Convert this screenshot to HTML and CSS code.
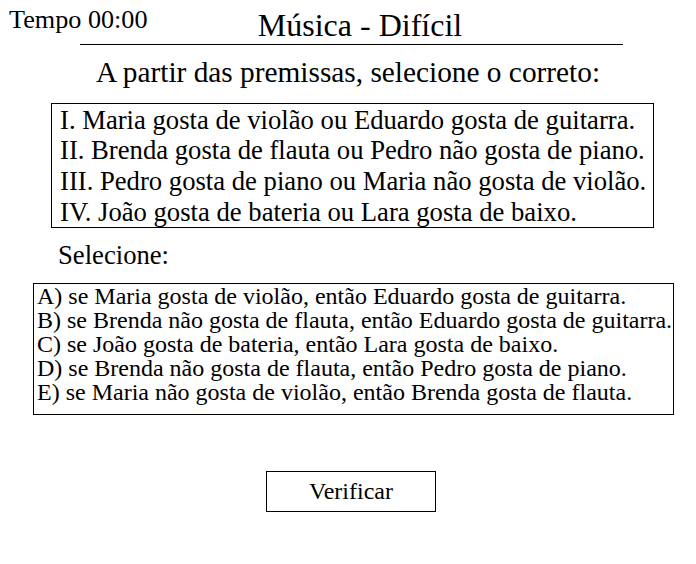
FILE: index.html
```html
<!DOCTYPE html>
<html lang="pt">
<head>
<meta charset="utf-8">
<title>Música - Difícil</title>
<link rel="stylesheet" href="styles.css">
</head>
<body>
<div class="page">
  <header class="header">
    <div class="timer">Tempo 00:00</div>
    <h1 class="title">Música - Difícil</h1>
  </header>
  <p class="prompt">A partir das premissas, selecione o correto:</p>
  <div class="premises">
    <div class="line">I. Maria gosta de violão ou Eduardo gosta de guitarra.</div>
    <div class="line">II. Brenda gosta de flauta ou Pedro não gosta de piano.</div>
    <div class="line">III. Pedro gosta de piano ou Maria não gosta de violão.</div>
    <div class="line">IV. João gosta de bateria ou Lara gosta de baixo.</div>
  </div>
  <p class="select-label">Selecione:</p>
  <div class="options">
    <div class="option">A) se Maria gosta de violão, então Eduardo gosta de guitarra.</div>
    <div class="option">B) se Brenda não gosta de flauta, então Eduardo gosta de guitarra.</div>
    <div class="option">C) se João gosta de bateria, então Lara gosta de baixo.</div>
    <div class="option">D) se Brenda não gosta de flauta, então Pedro gosta de piano.</div>
    <div class="option">E) se Maria não gosta de violão, então Brenda gosta de flauta.</div>
  </div>
  <div class="actions">
    <button class="verify" type="button">Verificar</button>
  </div>
</div>
</body>
</html>
```

FILE: styles.css
```css
html, body {
  margin: 0;
  padding: 0;
  background: #ffffff;
}

body {
  font-family: "Liberation Serif", "Times New Roman", serif;
  color: #000000;
}

.page {
  width: 696px;
}

.header {
  position: relative;
}

.timer {
  position: absolute;
  left: 9px;
  top: 5px;
  font-size: 26.2px;
  line-height: 1.15;
}

.title {
  margin: 0 73px 0 80px;
  padding: 7px 0 0 17px;
  font-size: 32px;
  font-weight: normal;
  line-height: 1.15;
  text-align: center;
  border-bottom: 1px solid #000000;
}

.prompt {
  margin: 11px 0 0 0;
  font-size: 29.33px;
  line-height: 1.15;
  text-align: center;
}

.premises {
  display: inline-block;
  margin: 13px 0 0 51px;
  padding: 1px 7px 0 8px;
  border: 1px solid #000000;
  font-size: 26.67px;
  line-height: 1.15;
}

.select-label {
  margin: 12px 0 0 58px;
  font-size: 26.67px;
  line-height: 1.15;
}

.options {
  display: inline-block;
  margin: 12px 0 0 33px;
  padding: 0 1px 10px 3px;
  border: 1px solid #000000;
  font-size: 24px;
  line-height: 24px;
}

.actions {
  margin: 56px 0 0 266px;
}

.verify {
  display: block;
  width: 170px;
  height: 41px;
  padding: 0;
  margin: 0;
  border: 1px solid #000000;
  background: #ffffff;
  font-family: "Liberation Serif", "Times New Roman", serif;
  font-size: 24px;
  color: #000000;
}
```
